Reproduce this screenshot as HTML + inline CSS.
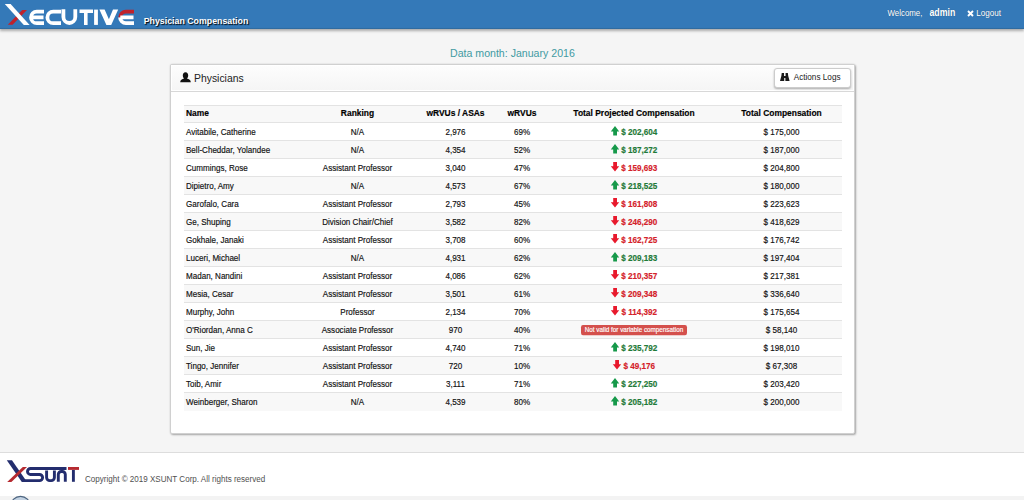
<!DOCTYPE html>
<html><head><meta charset="utf-8">
<style>
*{box-sizing:border-box;margin:0;padding:0}
html,body{width:1024px;height:500px;overflow:hidden}
body{font-family:"Liberation Sans",sans-serif;background:#f5f5f5;position:relative;color:#333}
.top{position:absolute;left:0;top:0;width:1024px;height:28.6px;background:linear-gradient(#3479b8 0,#3479b8 27.4px,#2f6a9e 28.6px);box-shadow:0 1.5px 2.5px rgba(0,0,0,.3)}
.logo{position:absolute;left:0;top:0}
.title{position:absolute;left:143.7px;top:16.4px;font-size:8.8px;font-weight:bold;color:#fff;text-shadow:1px 1px 1px #000;white-space:nowrap;line-height:11px;transform-origin:0 100%;transform:scaleY(1.1)}
.wt{position:absolute;color:#fff;white-space:nowrap;line-height:11px;text-shadow:0 0 1px rgba(0,0,0,.3);transform-origin:0 8.3px;transform:scaleY(1.15)}
.datamonth{position:absolute;left:450px;top:46.7px;font-size:10.6px;color:#429aa2;white-space:nowrap;line-height:12px}
.panel{position:absolute;left:170.3px;top:64px;width:684.7px;height:369.8px;background:#fff;border:1px solid #d0d0d0;border-radius:2px;box-shadow:1px 1px 2px rgba(0,0,0,.3),0 0 2px rgba(0,0,0,.12)}
.ph{position:absolute;left:0;top:0;width:682.7px;height:27.2px;background:linear-gradient(#fdfdfd,#f5f5f5);box-shadow:inset 0 0 0 1px #fff;border-bottom:1px solid #d8d8d8}
.ph .t{position:absolute;left:22.7px;top:7.5px;font-size:10.4px;color:#222;line-height:12px;white-space:nowrap}
.btn{position:absolute;left:602.7px;top:3px;width:77px;height:19.7px;background:#fff;border:1px solid #ccc;border-radius:3px;box-shadow:0 1px 2px rgba(0,0,0,.3)}
.btn .t{position:absolute;left:18.7px;top:3.6px;transform-origin:0 8px;transform:scaleY(1.12);font-size:8.2px;color:#222;line-height:10px;white-space:nowrap}
table{position:absolute;left:184px;top:104.5px;width:658px;border-collapse:collapse;table-layout:fixed}
td,th{-webkit-text-stroke:0.15px currentColor;height:18px;padding:0 2px;font-size:8.05px;line-height:10px;white-space:nowrap;text-align:center;border-top:1px solid #e3e3e3;color:#111}
th{font-size:8.45px;font-weight:bold;color:#000;height:17.7px}
tr:nth-child(odd) td, tr.h th{background:#f8f8f8}
tr:nth-child(even) td{background:#fff}
td:first-child,th:first-child{text-align:left}
.s{display:inline-block;transform-origin:50% 80%;transform:translateY(1.1px) scaleY(1.14)}
th .s{transform:translateY(-0.9px) scaleY(1.12)}
.up{color:#1f7a38;font-weight:bold;font-size:8.13px}
.dn{color:#d42129;font-weight:bold;font-size:8.13px}
.ar{display:inline-block;width:8px;height:9px;vertical-align:-1px;margin-right:2.5px}
.badge{display:inline-block;background:#d4504c;color:#fff;font-size:6.3px;line-height:8.9px;height:8.9px;padding:0 3.8px;border-radius:2px;vertical-align:1px}
.footer{position:absolute;left:0;top:452px;width:1024px;height:44px;background:#fff;border-top:1px solid #ddd}
.copy{position:absolute;left:85px;top:475px;font-size:8.05px;color:#505050;transform-origin:0 8px;transform:scaleY(1.12);white-space:nowrap;line-height:10px}
.bot{position:absolute;left:0;top:496px;width:1024px;height:4px;background:#f3f3f3}
</style></head><body>
<div class="top">
<svg class="logo" width="140" height="28" viewBox="0 0 140 28">
 <path d="M22.2 10.1 L27 10.1 L12.6 24.8 L7.8 24.8 Z" fill="#c0222b"/>
 <path d="M4.8 4 L10.6 4 L29.6 24.9 L23.8 24.9 Z" fill="#fff"/>
 <path d="M120.1 17.4 A5.8 5.8 0 0 1 125.9 11.6 H134" fill="none" stroke="#c0222b" stroke-width="3.6"/>
 <g fill="none" stroke="#fff" stroke-width="3.8">
  <path d="M44 11.6 H36.8 A5.8 5.8 0 0 0 36.8 23.2 H44 M30.6 17.4 H43.5"/>
  <path d="M61 11.6 H53.2 A5.8 5.8 0 0 0 53.2 23.2 H61"/>
  <path d="M63.4 9.3 V17.05 A5.95 5.95 0 0 0 75.3 17.05 V9.3"/>
  <path d="M79.5 11.2 H93 M85.8 11 V24.9" stroke-width="3.6"/>
  <path d="M96 9.6 V24.9"/>
  <path d="M134 23.2 H125.9 A5.8 5.8 0 0 1 120.1 17.4 M120.3 17.4 H133.5"/>
 </g>
 <path d="M99.4 9.6 L104.6 9.6 L108.9 19.2 L113 9.6 L118.2 9.6 L111.2 24.9 L106.4 24.9 Z" fill="#fff"/>
</svg>
<div class="title">Physician Compensation</div>
<div class="wt" style="left:887.5px;top:8.36px;font-size:7.9px">Welcome,</div>
<div class="wt" style="left:929.5px;top:8.06px;font-size:8.76px;font-weight:bold">admin</div>
<svg style="position:absolute;left:967px;top:9.5px" width="7" height="7" viewBox="0 0 7 7"><path d="M1 1 L6 6 M6 1 L1 6" stroke="#fff" stroke-width="1.9"/></svg>
<div class="wt" style="left:976.3px;top:8.3px;font-size:8.1px">Logout</div>
</div>
<div class="datamonth">Data month: January 2016</div>
<div class="panel">
 <div class="ph">
  <svg style="position:absolute;left:8.5px;top:7.3px" width="11" height="11" viewBox="0 0 11 11"><path d="M5.5 0.3 C7.3 0.3 8.2 1.7 8.2 3.4 C8.2 5 7.4 6.2 6.8 6.6 C9 7.1 10.8 8 10.8 10.2 H0.2 C0.2 8 2 7.1 4.2 6.6 C3.6 6.2 2.8 5 2.8 3.4 C2.8 1.7 3.7 0.3 5.5 0.3Z" fill="#111"/></svg>
  <div class="t">Physicians</div>
  <div class="btn">
   <svg style="position:absolute;left:5.5px;top:3.9px" width="9.6" height="8" viewBox="0 0 10 8" preserveAspectRatio="none"><path d="M1.8 0 H4.2 V3 H5.8 V0 H8.2 L8.6 3 L10 8 H5.6 V5 H4.4 V8 H0 L1.4 3 Z" fill="#1a1a1a"/></svg>
   <div class="t">Actions Logs</div>
  </div>
 </div>
</div>
<table>
<colgroup><col style="width:117px"><col style="width:113px"><col style="width:83px"><col style="width:50px"><col style="width:174px"><col style="width:121px"></colgroup>
<tr class="h"><th><span class="s">Name</span></th><th><span class="s">Ranking</span></th><th><span class="s">wRVUs / ASAs</span></th><th><span class="s">wRVUs</span></th><th><span class="s">Total Projected Compensation</span></th><th><span class="s">Total Compensation</span></th></tr>
<tr><td><span class="s">Avitabile, Catherine</span></td><td><span class="s">N/A</span></td><td><span class="s">2,976</span></td><td><span class="s">69%</span></td><td><span class="s"><svg class="ar" viewBox="0 0 8 9" overflow="visible"><path d="M4 0.2 L8.2 4.9 H6 V8.5 H2.2 V4.9 H-0.2 Z" fill="#16994a"/></svg><span class="up">$ 202,604</span></span></td><td><span class="s">$ 175,000</span></td></tr>
<tr><td><span class="s">Bell-Cheddar, Yolandee</span></td><td><span class="s">N/A</span></td><td><span class="s">4,354</span></td><td><span class="s">52%</span></td><td><span class="s"><svg class="ar" viewBox="0 0 8 9" overflow="visible"><path d="M4 0.2 L8.2 4.9 H6 V8.5 H2.2 V4.9 H-0.2 Z" fill="#16994a"/></svg><span class="up">$ 187,272</span></span></td><td><span class="s">$ 187,000</span></td></tr>
<tr><td><span class="s">Cummings, Rose</span></td><td><span class="s">Assistant Professor</span></td><td><span class="s">3,040</span></td><td><span class="s">47%</span></td><td><span class="s"><svg class="ar" viewBox="0 0 8 9" overflow="visible"><path d="M4 8.5 L8.2 3.8 H6 V0.2 H2.2 V3.8 H-0.2 Z" fill="#e8192c"/></svg><span class="dn">$ 159,693</span></span></td><td><span class="s">$ 204,800</span></td></tr>
<tr><td><span class="s">Dipietro, Amy</span></td><td><span class="s">N/A</span></td><td><span class="s">4,573</span></td><td><span class="s">67%</span></td><td><span class="s"><svg class="ar" viewBox="0 0 8 9" overflow="visible"><path d="M4 0.2 L8.2 4.9 H6 V8.5 H2.2 V4.9 H-0.2 Z" fill="#16994a"/></svg><span class="up">$ 218,525</span></span></td><td><span class="s">$ 180,000</span></td></tr>
<tr><td><span class="s">Garofalo, Cara</span></td><td><span class="s">Assistant Professor</span></td><td><span class="s">2,793</span></td><td><span class="s">45%</span></td><td><span class="s"><svg class="ar" viewBox="0 0 8 9" overflow="visible"><path d="M4 8.5 L8.2 3.8 H6 V0.2 H2.2 V3.8 H-0.2 Z" fill="#e8192c"/></svg><span class="dn">$ 161,808</span></span></td><td><span class="s">$ 223,623</span></td></tr>
<tr><td><span class="s">Ge, Shuping</span></td><td><span class="s">Division Chair/Chief</span></td><td><span class="s">3,582</span></td><td><span class="s">82%</span></td><td><span class="s"><svg class="ar" viewBox="0 0 8 9" overflow="visible"><path d="M4 8.5 L8.2 3.8 H6 V0.2 H2.2 V3.8 H-0.2 Z" fill="#e8192c"/></svg><span class="dn">$ 246,290</span></span></td><td><span class="s">$ 418,629</span></td></tr>
<tr><td><span class="s">Gokhale, Janaki</span></td><td><span class="s">Assistant Professor</span></td><td><span class="s">3,708</span></td><td><span class="s">60%</span></td><td><span class="s"><svg class="ar" viewBox="0 0 8 9" overflow="visible"><path d="M4 8.5 L8.2 3.8 H6 V0.2 H2.2 V3.8 H-0.2 Z" fill="#e8192c"/></svg><span class="dn">$ 162,725</span></span></td><td><span class="s">$ 176,742</span></td></tr>
<tr><td><span class="s">Luceri, Michael</span></td><td><span class="s">N/A</span></td><td><span class="s">4,931</span></td><td><span class="s">62%</span></td><td><span class="s"><svg class="ar" viewBox="0 0 8 9" overflow="visible"><path d="M4 0.2 L8.2 4.9 H6 V8.5 H2.2 V4.9 H-0.2 Z" fill="#16994a"/></svg><span class="up">$ 209,183</span></span></td><td><span class="s">$ 197,404</span></td></tr>
<tr><td><span class="s">Madan, Nandini</span></td><td><span class="s">Assistant Professor</span></td><td><span class="s">4,086</span></td><td><span class="s">62%</span></td><td><span class="s"><svg class="ar" viewBox="0 0 8 9" overflow="visible"><path d="M4 8.5 L8.2 3.8 H6 V0.2 H2.2 V3.8 H-0.2 Z" fill="#e8192c"/></svg><span class="dn">$ 210,357</span></span></td><td><span class="s">$ 217,381</span></td></tr>
<tr><td><span class="s">Mesia, Cesar</span></td><td><span class="s">Assistant Professor</span></td><td><span class="s">3,501</span></td><td><span class="s">61%</span></td><td><span class="s"><svg class="ar" viewBox="0 0 8 9" overflow="visible"><path d="M4 8.5 L8.2 3.8 H6 V0.2 H2.2 V3.8 H-0.2 Z" fill="#e8192c"/></svg><span class="dn">$ 209,348</span></span></td><td><span class="s">$ 336,640</span></td></tr>
<tr><td><span class="s">Murphy, John</span></td><td><span class="s">Professor</span></td><td><span class="s">2,134</span></td><td><span class="s">70%</span></td><td><span class="s"><svg class="ar" viewBox="0 0 8 9" overflow="visible"><path d="M4 8.5 L8.2 3.8 H6 V0.2 H2.2 V3.8 H-0.2 Z" fill="#e8192c"/></svg><span class="dn">$ 114,392</span></span></td><td><span class="s">$ 175,654</span></td></tr>
<tr><td><span class="s">O'Riordan, Anna C</span></td><td><span class="s">Associate Professor</span></td><td><span class="s">970</span></td><td><span class="s">40%</span></td><td><span class="s"><span class="badge">Not valid for variable compensation</span></span></td><td><span class="s">$ 58,140</span></td></tr>
<tr><td><span class="s">Sun, Jie</span></td><td><span class="s">Assistant Professor</span></td><td><span class="s">4,740</span></td><td><span class="s">71%</span></td><td><span class="s"><svg class="ar" viewBox="0 0 8 9" overflow="visible"><path d="M4 0.2 L8.2 4.9 H6 V8.5 H2.2 V4.9 H-0.2 Z" fill="#16994a"/></svg><span class="up">$ 235,792</span></span></td><td><span class="s">$ 198,010</span></td></tr>
<tr><td><span class="s">Tingo, Jennifer</span></td><td><span class="s">Assistant Professor</span></td><td><span class="s">720</span></td><td><span class="s">10%</span></td><td><span class="s"><svg class="ar" viewBox="0 0 8 9" overflow="visible"><path d="M4 8.5 L8.2 3.8 H6 V0.2 H2.2 V3.8 H-0.2 Z" fill="#e8192c"/></svg><span class="dn">$ 49,176</span></span></td><td><span class="s">$ 67,308</span></td></tr>
<tr><td><span class="s">Toib, Amir</span></td><td><span class="s">Assistant Professor</span></td><td><span class="s">3,111</span></td><td><span class="s">71%</span></td><td><span class="s"><svg class="ar" viewBox="0 0 8 9" overflow="visible"><path d="M4 0.2 L8.2 4.9 H6 V8.5 H2.2 V4.9 H-0.2 Z" fill="#16994a"/></svg><span class="up">$ 227,250</span></span></td><td><span class="s">$ 203,420</span></td></tr>
<tr><td><span class="s">Weinberger, Sharon</span></td><td><span class="s">N/A</span></td><td><span class="s">4,539</span></td><td><span class="s">80%</span></td><td><span class="s"><svg class="ar" viewBox="0 0 8 9" overflow="visible"><path d="M4 0.2 L8.2 4.9 H6 V8.5 H2.2 V4.9 H-0.2 Z" fill="#16994a"/></svg><span class="up">$ 205,182</span></span></td><td><span class="s">$ 200,000</span></td></tr>
</table>
<div class="footer"></div>
<svg style="position:absolute;left:0;top:452px" width="90" height="40" viewBox="0 452 90 40">
 <path d="M6.8 460.3 L12 460.3 L27 482 L21.8 482 Z" fill="#232d6e"/>
 <path d="M22.8 467 L27 467 L11.4 482 L7.2 482 Z" fill="#b52a30"/>
 <g fill="none" stroke="#232d6e" stroke-width="2.9">
  <path d="M66.5 468.45 H30.5 A3 3 0 0 0 30.5 474.45 H39.5 A3.1 3.1 0 0 1 39.5 480.65 H23"/>
  <path d="M46.6 470.5 V477.4 A3.2 3.2 0 0 0 49.8 480.6 H51.2 A3.2 3.2 0 0 0 54.4 477.4 V470.5"/>
  <path d="M58.3 481.8 V474.5 A3 3 0 0 1 61.3 471.5 H62.3 A3 3 0 0 1 65.3 474.5 V481.8"/>
  <path d="M73.4 470 V481.8"/>
 </g>
 <path d="M68 467 H79 V469.9 H68 Z" fill="#b52a30"/>
</svg>
<div class="copy">Copyright &copy; 2019 XSUNT Corp. All rights reserved</div>
<div class="bot"></div>
<svg style="position:absolute;left:0;top:494px" width="40" height="6" viewBox="0 494 40 6"><circle cx="20.5" cy="506" r="9.7" fill="#c3d2e2" stroke="#4d6580" stroke-width="1.2"/></svg>
</body></html>
